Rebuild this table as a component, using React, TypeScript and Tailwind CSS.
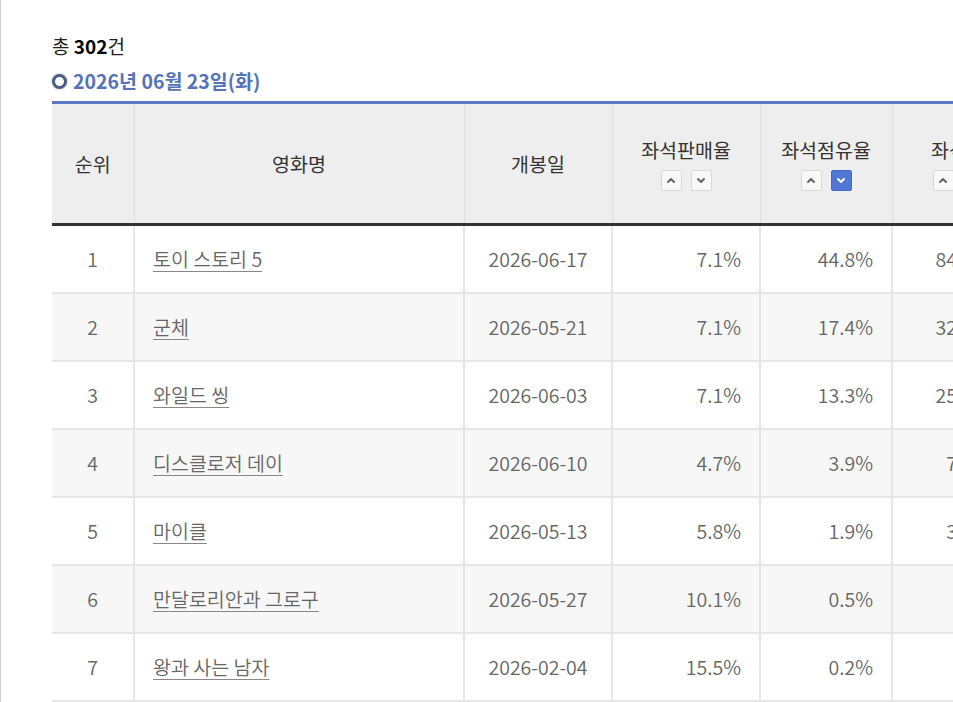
import React from 'react';

type Row = {
  rank: number;
  title: string;
  open: string;
  sales: string;
  share: string;
  seats: string;
};

const rows: Row[] = [
  { rank: 1, title: '토이 스토리 5', open: '2026-06-17', sales: '7.1%', share: '44.8%', seats: '846,122' },
  { rank: 2, title: '군체', open: '2026-05-21', sales: '7.1%', share: '17.4%', seats: '327,640' },
  { rank: 3, title: '와일드 씽', open: '2026-06-03', sales: '7.1%', share: '13.3%', seats: '251,908' },
  { rank: 4, title: '디스클로저 데이', open: '2026-06-10', sales: '4.7%', share: '3.9%', seats: '74,215' },
  { rank: 5, title: '마이클', open: '2026-05-13', sales: '5.8%', share: '1.9%', seats: '36,480' },
  { rank: 6, title: '만달로리안과 그로구', open: '2026-05-27', sales: '10.1%', share: '0.5%', seats: '9,872' },
  { rank: 7, title: '왕과 사는 남자', open: '2026-02-04', sales: '15.5%', share: '0.2%', seats: '3,954' },
  { rank: 8, title: '하이재킹', open: '2026-06-21', sales: '3.2%', share: '0.1%', seats: '1,204' },
];

function SortButton({ dir, active }: { dir: 'up' | 'down'; active?: boolean }) {
  return (
    <span
      className={
        active
          ? 'flex h-[21px] w-[21px] items-center justify-center rounded-[2px] border border-[#4467c9] bg-[#5076d6] text-white'
          : 'flex h-[21px] w-[21px] items-center justify-center rounded-[2px] border border-[#d8d8d8] bg-[#f8f8f8] text-[#666]'
      }
    >
      <svg width="10" height="7" viewBox="0 0 10 7" fill="none" stroke="currentColor" strokeWidth="2" strokeLinecap="round" strokeLinejoin="round">
        {dir === 'up' ? <polyline points="2 5 5 2 8 5" /> : <polyline points="2 2 5 5 8 2" />}
      </svg>
    </span>
  );
}

function SortHead({ label, active }: { label: string; active?: 'up' | 'down' }) {
  return (
    <th className="border-x border-[#dedede] align-middle font-normal">
      <div className="flex flex-col items-center gap-[7px]">
        <span className="leading-[26px]">{label}</span>
        <div className="flex gap-[9px]">
          <SortButton dir="up" active={active === 'up'} />
          <SortButton dir="down" active={active === 'down'} />
        </div>
      </div>
    </th>
  );
}

export default function App() {
  return (
    <div className="h-screen overflow-hidden border-l border-[#cfcfcf] bg-white font-['Noto_Sans_CJK_KR','Noto_Sans',sans-serif]">
      <div className="pl-[51px] pt-[33px]">
        <p className="text-[19px] leading-[26px] text-[#222]">
          총 <b className="font-bold text-black">302</b>건
        </p>
        <h2 className="mt-[9px] flex items-center gap-[6px] text-[19.5px] font-bold leading-[26px] text-[#5573b6]">
          <span className="h-[15px] w-[15px] rounded-full border-[3.5px] border-[#4d5b80] shadow-[0_0_1.5px_#4d5b80]" />
          2026년 06월 23일(화)
        </h2>
        <table className="mt-[7px] w-[1120px] table-fixed border-collapse border-t-[3px] border-[#5a78c6] text-[19.5px]">
          <colgroup>
            <col className="w-[82px]" />
            <col className="w-[330px]" />
            <col className="w-[148px]" />
            <col className="w-[148px]" />
            <col className="w-[132px]" />
            <col className="w-[132px]" />
            <col className="w-[148px]" />
          </colgroup>
          <thead>
            <tr className="h-[122px] border-b-[3px] border-[#333] bg-[#eeeeee] text-[#333]">
              <th className="border-r border-[#dedede] font-normal">순위</th>
              <th className="border-x border-[#dedede] font-normal">영화명</th>
              <th className="border-x border-[#dedede] font-normal">개봉일</th>
              <SortHead label="좌석판매율" />
              <SortHead label="좌석점유율" active="down" />
              <SortHead label="좌석수" />
              <SortHead label="상영횟수" />
            </tr>
          </thead>
          <tbody className="font-['Noto_Sans_CJK_KR_DemiLight','Noto_Sans_CJK_KR_Light','Noto_Sans_CJK_KR',sans-serif] font-light text-[#666]">
            {rows.map((r, i) => (
              <tr key={r.rank} className={`h-[68px] border-b-2 border-[#e6e6e6] ${i % 2 === 1 ? 'bg-[#f7f7f7]' : 'bg-white'}`}>
                <td className="border-r-2 border-[#e6e6e6] text-center">{r.rank}</td>
                <td className="border-x-2 border-[#e6e6e6] px-[18px] text-left">
                  <span className="underline decoration-[#888] decoration-1 underline-offset-[4px]">{r.title}</span>
                </td>
                <td className="border-x-2 border-[#e6e6e6] text-center">{r.open}</td>
                <td className="border-x-2 border-[#e6e6e6] px-[18px] text-right">{r.sales}</td>
                <td className="border-x-2 border-[#e6e6e6] px-[18px] text-right">{r.share}</td>
                <td className="border-x-2 border-[#e6e6e6] px-[18px] text-right">{r.seats}</td>
                <td className="border-x-2 border-[#e6e6e6] px-[18px] text-right">{(r.rank * 131).toLocaleString()}</td>
              </tr>
            ))}
          </tbody>
        </table>
      </div>
    </div>
  );
}
